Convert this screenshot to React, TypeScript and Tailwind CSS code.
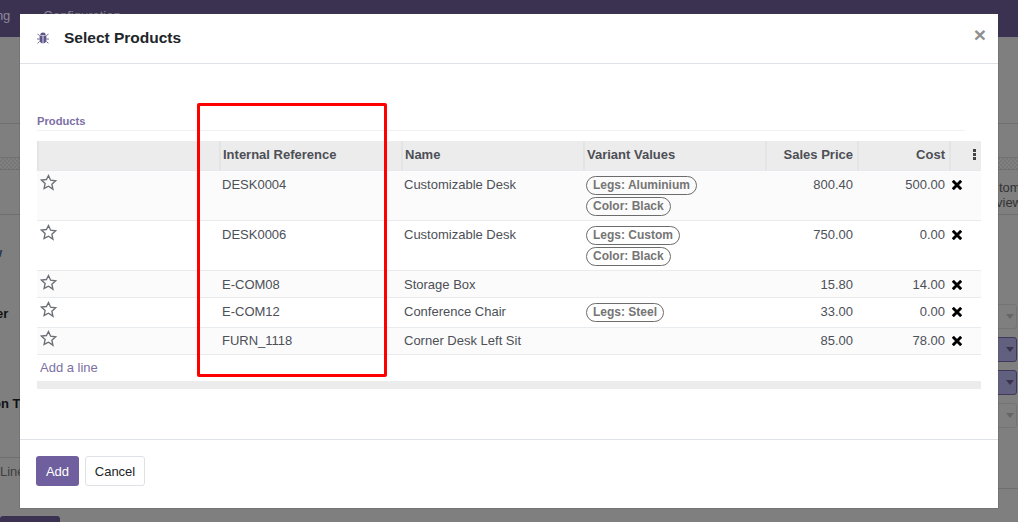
import React from "react";

const columns = "182px 182px 182px 182px 92px 92px 32px";

const rows = [
  { ref: "DESK0004", name: "Customizable Desk", tags: ["Legs: Aluminium", "Color: Black"], price: "800.40", cost: "500.00", h: "h-[50px]", odd: true, text: "pt-[6px]", x: "pt-[9px]", star: "pt-[3px]" },
  { ref: "DESK0006", name: "Customizable Desk", tags: ["Legs: Custom", "Color: Black"], price: "750.00", cost: "0.00", h: "h-[50px]", odd: false, text: "pt-[6px]", x: "pt-[9px]", star: "pt-[3px]" },
  { ref: "E-COM08", name: "Storage Box", tags: [], price: "15.80", cost: "14.00", h: "h-[27px]", odd: true, text: "pt-[6px]", x: "pt-[9px]", star: "pt-[3px]" },
  { ref: "E-COM12", name: "Conference Chair", tags: ["Legs: Steel"], price: "33.00", cost: "0.00", h: "h-[30px]", odd: false, text: "pt-[6px]", x: "pt-[9px]", star: "pt-[3px]" },
  { ref: "FURN_1118", name: "Corner Desk Left Sit", tags: [], price: "85.00", cost: "78.00", h: "h-[27px]", odd: true, text: "pt-[5px]", x: "pt-[8px]", star: "pt-[2px]" },
];

function Star() {
  return (
    <svg width="17" height="17" viewBox="0 0 24 24" fill="none" stroke="#6b6f76" strokeWidth="1.9" strokeLinejoin="miter">
      <path d="M12 2.2l2.95 6.6 7.15.75-5.35 4.8 1.5 7.05L12 17.2l-6.25 3.2 1.5-7.05-5.35-4.8 7.15-.75z" />
    </svg>
  );
}

function Cross() {
  return (
    <svg width="10" height="10" viewBox="0 0 10 10" fill="none" stroke="#000000" strokeWidth="2.9" strokeLinecap="butt">
      <path d="M.8.8l8.4 8.4M9.2.8L.8 9.2" />
    </svg>
  );
}

function Bug() {
  return (
    <svg width="12" height="12" viewBox="0 0 12 12" fill="#5d5488">
      <path d="M3.4 3a2.6 2.4 0 0 1 5.2 0z" />
      <path d="M2.6 3.6h3v7.8C3.8 11.3 2.6 9.8 2.6 8zM6.4 3.6h3V8c0 1.8-1.2 3.3-3 3.4z" />
      <path d="M.5 1.8l2 2M11.5 1.8l-2 2M0 7h2.6M12 7H9.4M.6 11.4l2-2M11.4 11.4l-2-2" stroke="#5d5488" strokeWidth="0.9" fill="none" />
    </svg>
  );
}

function Caret({ color }: { color: string }) {
  return (
    <svg width="8" height="5" viewBox="0 0 8 5"><path d="M0 0h8L4 5z" fill={color} /></svg>
  );
}

function HeadCell({ children, right }: { children?: React.ReactNode; right?: boolean }) {
  return (
    <div className={`flex h-[29px] items-center border-l-2 border-[#e2e4e6] pb-[2px] pl-[2px] pr-[4px] ${right ? "justify-end" : ""}`}>
      {children}
    </div>
  );
}

function Select({ active }: { active?: boolean }) {
  return (
    <div className={`flex h-[25px] w-[32px] items-center justify-end rounded-[3px] border pr-[2px] ${active ? "border-[#40385c] bg-[#62607f]" : "border-[#747474]"}`}>
      <Caret color={active ? "#3b3251" : "#666666"} />
    </div>
  );
}

export default function App() {
  return (
    <div className="relative h-[522px] w-[1018px] overflow-hidden bg-[#7f7f7f] font-['Liberation_Sans',Arial,sans-serif] text-[13px] text-[#4c5057]">
      {/* dimmed page behind the dialog */}
      <div className="flex h-[37px] items-end whitespace-nowrap bg-[#3b3251] pb-[12px] text-[13px] text-[#8d889b]">
        <span className="ml-[-7px]">ing</span>
        <span className="ml-[33px]">Configuration</span>
      </div>
      <div className="h-[87px] border-b border-[#6f6f6f]" />
      <div className="absolute left-0 top-[157px] h-[13px] w-full border-y border-[#707070] bg-[repeating-conic-gradient(#777777_0_25%,#808080_0_50%)] bg-[length:4px_4px]" />
      <div className="absolute left-[996px] top-[180px] whitespace-nowrap text-[13px] leading-[15px] text-[#333333]">
        <div className="pl-[3px]">tom</div>
        <div>view</div>
      </div>
      <div className="absolute left-0 top-[214px] h-px w-full bg-[#6f6f6f]" />
      <div className="absolute left-[-8px] top-[243px] text-[13px] font-bold text-[#26324f]">w</div>
      <div className="absolute left-[-4px] top-[304px] text-[13px] font-bold text-[#111111]">er</div>
      <div className="absolute left-[-7px] top-[394px] whitespace-nowrap text-[13px] font-bold text-[#111111]">on T</div>
      <div className="absolute left-0 top-[457px] h-px w-[20px] bg-[#6f6f6f]" />
      <div className="absolute left-0 top-[462px] text-[13px] text-[#404040]">Line</div>
      <div className="absolute left-0 top-[516px] h-[6px] w-[60px] rounded-t-[3px] bg-[#3b3251]" />
      <div className="absolute left-[985px] top-[304px] flex flex-col gap-[8px]">
        <Select />
        <Select active />
        <Select active />
        <Select />
      </div>
      <div className="absolute left-[998px] top-[488px] h-px w-[20px] bg-[#6f6f6f]" />

      {/* dialog */}
      <div className="absolute left-[20px] top-[14px] flex h-[494px] w-[978px] flex-col bg-white shadow-[0_0_1px_#444444]">
        <header className="relative flex h-[50px] shrink-0 items-center border-b border-[#dee2e6] pb-[2px] pl-[17px]">
          <Bug />
          <h4 className="ml-[15px] text-[15.5px] font-bold leading-none text-[#212529]">Select Products</h4>
          <span className="absolute right-[12px] top-[10px] text-[21px] font-bold leading-[21px] text-[#8f8f8f]">×</span>
        </header>

        <main className="relative flex-1 px-[17px]">
          <div className="mt-[51px] h-[16px] w-[928px] border-b border-[#f2f2f2] text-[11.2px] font-bold leading-[12px] text-[#7c6fa5]">Products</div>
          <div className="mt-[10px] w-[944px]">
            <div className="grid border-b border-[#e6eaee] bg-[#ececec] text-[13px] font-bold text-[#4c4f55]" style={{ gridTemplateColumns: columns }}>
              <HeadCell />
              <HeadCell>Internal Reference</HeadCell>
              <HeadCell>Name</HeadCell>
              <HeadCell>Variant Values</HeadCell>
              <HeadCell right>Sales Price</HeadCell>
              <HeadCell right>Cost</HeadCell>
              <div className="flex h-[29px] items-center justify-end border-l-2 border-[#e2e4e6] pb-[2px] pr-[5px]">
                <svg width="3" height="11" viewBox="0 0 3 11" fill="#444444"><rect width="3" height="3" y="0" /><rect width="3" height="3" y="4" /><rect width="3" height="3" y="8" /></svg>
              </div>
            </div>
            {rows.map((r) => (
              <div key={r.ref} className={`grid border-b border-[#e9ecef] ${r.h} ${r.odd ? "bg-[#fbfbfb]" : "bg-white"}`} style={{ gridTemplateColumns: columns }}>
                <div className={`${r.star} pl-[3px]`}><Star /></div>
                <div className={`${r.text} pl-[3px] leading-[16px]`}>{r.ref}</div>
                <div className={`${r.text} pl-[3px] leading-[16px]`}>{r.name}</div>
                <div className="flex flex-col items-start gap-[2px] pl-[3px] pt-[5px]">
                  {r.tags.map((t) => (
                    <span key={t} className="h-[19px] rounded-full border border-[#6c6c6c] px-[6px] text-[12px] font-bold leading-[16px] text-[#757575]">{t}</span>
                  ))}
                </div>
                <div className={`${r.text} pr-[4px] text-right leading-[16px]`}>{r.price}</div>
                <div className={`${r.text} pr-[4px] text-right leading-[16px]`}>{r.cost}</div>
                <div className={`${r.x} pl-[3px]`}><Cross /></div>
              </div>
            ))}
            <div className="h-[26px] pl-[3px] pt-[5px] leading-[16px] text-[#7c6fa5]">Add a line</div>
            <div className="h-[8px] bg-[#ececec]" />
          </div>
        </main>

        <footer className="flex h-[69px] shrink-0 items-start gap-[6px] border-t border-[#dee2e6] pl-[16px] pt-[16px]">
          <button className="h-[30px] w-[43px] rounded-[3px] bg-[#6f5f9e] pt-px text-[13px] text-white">Add</button>
          <button className="h-[30px] w-[60px] rounded-[3px] border border-[#dee2e6] bg-white pt-px text-[13px] text-[#212529]">Cancel</button>
        </footer>
      </div>

      {/* annotation */}
      <div className="absolute left-[197px] top-[103px] h-[274px] w-[190px] rounded-[2px] border-[3px] border-[#ff0000]" />
    </div>
  );
}
